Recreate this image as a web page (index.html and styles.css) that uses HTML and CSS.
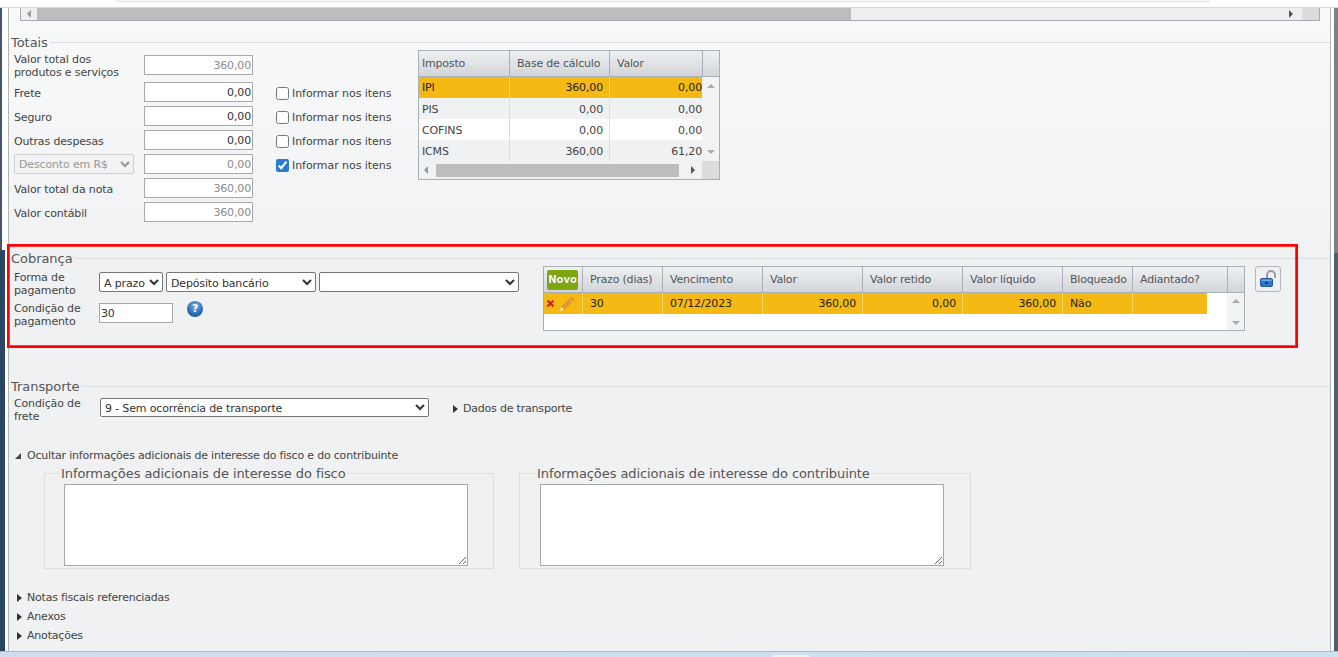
FILE: index.html
```html
<!DOCTYPE html>
<html lang="pt-BR">
<head>
<meta charset="utf-8">
<title>Nota fiscal</title>
<link rel="stylesheet" href="styles.css">
</head>
<body>
<div class="screen">
  <div class="top-strip"><div class="top-pill"></div></div>
  <div class="desk">
    <div class="left-edge"></div>
    <main class="window">
      <div class="top-grid-end">
        <div class="hbar top-hbar">
          <span class="arrow-l"></span>
          <span class="thumb top-thumb"></span>
          <span class="hbar-rest"><span class="arrow-r"></span></span>
          <span class="corner top-corner"></span>
        </div>
      </div>

      <section class="sec sec-totais">
        <div class="head"><h2>Totais</h2></div>
        <div class="totais-body">
          <div class="form">
            <div class="row row-first"><label class="lab">Valor total dos<br>produtos e serviços</label><input class="num ro" value="360,00" readonly></div>
            <div class="row"><label class="lab">Frete</label><input class="num" value="0,00"></div>
            <div class="row"><label class="lab">Seguro</label><input class="num" value="0,00"></div>
            <div class="row"><label class="lab">Outras despesas</label><input class="num" value="0,00"></div>
            <div class="row"><select class="disc" disabled><option>Desconto em R$</option></select><input class="num ro" value="0,00" readonly></div>
            <div class="row"><label class="lab">Valor total da nota</label><input class="num ro" value="360,00" readonly></div>
            <div class="row"><label class="lab">Valor contábil</label><input class="num ro" value="360,00" readonly></div>
          </div>
          <div class="checks">
            <label class="chk"><input type="checkbox">Informar nos itens</label>
            <label class="chk"><input type="checkbox">Informar nos itens</label>
            <label class="chk"><input type="checkbox">Informar nos itens</label>
            <label class="chk chk-on"><input type="checkbox" checked>Informar nos itens</label>
          </div>
          <div class="tax">
            <div class="tax-head">
              <div>Imposto</div><div>Base de cálculo</div><div>Valor</div><div></div>
            </div>
            <div class="tax-main">
              <div class="tax-rows">
                <div class="tax-row sel"><div>IPI</div><div class="r">360,00</div><div class="r clip">0,00</div></div>
                <div class="tax-row alt"><div>PIS</div><div class="r">0,00</div><div class="r clip">0,00</div></div>
                <div class="tax-row"><div>COFINS</div><div class="r">0,00</div><div class="r clip">0,00</div></div>
                <div class="tax-row alt"><div>ICMS</div><div class="r">360,00</div><div class="r clip">61,20</div></div>
              </div>
              <div class="vbar"><span class="arrow-u"></span><span class="arrow-d"></span></div>
            </div>
            <div class="hbar tax-hbar">
              <span class="arrow-l"></span>
              <span class="thumb tax-thumb"></span>
              <span class="hbar-rest"><span class="arrow-r"></span></span>
              <span class="corner tax-corner"></span>
            </div>
          </div>
        </div>
      </section>

      <section class="sec sec-cobranca">
        <div class="head"><h2>Cobrança</h2></div>
        <div class="cob-body">
          <div class="cob-form">
            <div class="cob-line">
              <label class="lab lab-cob">Forma de<br>pagamento</label>
              <select class="sel-a"><option>A prazo</option></select>
              <select class="sel-b"><option>Depósito bancário</option></select>
              <select class="sel-c"><option></option></select>
            </div>
            <div class="cob-line cob-line2">
              <label class="lab lab-cob">Condição de<br>pagamento</label>
              <input class="cond" value="30">
              <span class="help">?</span>
            </div>
          </div>
          <div class="parc">
            <div class="parc-head">
              <div class="novo-cell"><span class="novo">Novo</span></div>
              <div>Prazo (dias)</div><div>Vencimento</div><div>Valor</div><div>Valor retido</div><div>Valor líquido</div><div>Bloqueado</div><div>Adiantado?</div><div></div>
            </div>
            <div class="parc-main">
              <div class="parc-rows">
                <div class="parc-row">
                  <div class="acts">
                    <svg width="9" height="9" viewBox="0 0 9 9" aria-hidden="true"><path d="M1.5 1.5 7.5 7.5M7.5 1.5 1.5 7.5" stroke="#c8261c" stroke-width="2" fill="none"/></svg>
                    <svg width="16" height="16" viewBox="0 0 16 16" aria-hidden="true"><path d="M12.5 1 15 3.5 5.2 13.3 2.4 11z" fill="#e8952f" stroke="#cf7f22" stroke-width=".6"/><path d="M11 3.4 13 5.4" stroke="#f8cf8f" stroke-width="1"/><path d="M2.4 11 5.2 13.3 1.2 15z" fill="#fff3d8"/></svg>
                  </div>
                  <div>30</div><div>07/12/2023</div><div class="r">360,00</div><div class="r">0,00</div><div class="r">360,00</div><div>Não</div><div></div>
                </div>
              </div>
              <div class="vbar parc-vbar"><span class="arrow-u"></span><span class="arrow-d"></span></div>
            </div>
          </div>
          <button class="lock" type="button" aria-label="Desbloquear">
            <svg width="20" height="20" viewBox="0 0 20 20" aria-hidden="true"><path d="M9 9V6a4 4 0 0 1 8 0v3" fill="none" stroke="#9a9da2" stroke-width="2"/><rect x="2.5" y="9.5" width="12" height="8" rx="1.5" fill="#2f78cc" stroke="#23599c"/><rect x="3.5" y="10.5" width="10" height="1.5" fill="#66abe8"/><circle cx="8.5" cy="14" r="1.3" fill="#102f55"/></svg>
          </button>
        </div>
      </section>

      <section class="sec sec-transporte">
        <div class="head"><h2>Transporte</h2></div>
        <div class="trans-body">
          <label class="lab lab-frete">Condição de<br>frete</label>
          <select class="sel-frete"><option>9 - Sem ocorrência de transporte</option></select>
          <span class="toggle toggle-dados"><i class="tri"></i>Dados de transporte</span>
        </div>
      </section>

      <div class="toggle toggle-ocultar"><i class="tri-open"></i>Ocultar informações adicionais de interesse do fisco e do contribuinte</div>

      <div class="infos">
        <fieldset class="info info-a">
          <legend>Informações adicionais de interesse do fisco</legend>
          <textarea></textarea>
        </fieldset>
        <fieldset class="info info-b">
          <legend>Informações adicionais de interesse do contribuinte</legend>
          <textarea></textarea>
        </fieldset>
      </div>

      <div class="toggles">
        <div class="toggle"><i class="tri"></i>Notas fiscais referenciadas</div>
        <div class="toggle"><i class="tri"></i>Anexos</div>
        <div class="toggle"><i class="tri"></i>Anotações</div>
      </div>
    </main>
    <div class="right-edge"></div>
  </div>
  <div class="footer"><div class="foot-pill"></div></div>
  <div class="redbox"></div>
</div>
</body>
</html>
```
FILE: styles.css
```css
* { box-sizing: border-box; }
html, body { margin: 0; height: 100%; overflow: hidden; }
body { font: 11px/13px "DejaVu Sans", Verdana, sans-serif; letter-spacing: -0.15px; color: #444; background: #fff; }

.screen { position: relative; width: 1338px; height: 657px; display: flex; flex-direction: column; }
.top-strip { height: 8px; background: #fff; border-bottom: 1px solid #d8d8d8; flex: none; overflow: hidden; }
.top-pill { width: 1095px; height: 3px; margin-left: 115px; background: #f1f1f1; border-radius: 0 0 12px 12px; }

.desk { flex: 1; display: flex; min-height: 0; }
.left-edge { width: 8px; flex: none; background:
  linear-gradient(to right, #46566a 0, #46566a 2px, #fff 2px) top left / 8px 242px no-repeat,
  linear-gradient(to right, #2c4560 0, #2c4560 5px, #fff 5px); }
.right-edge { width: 7px; flex: none; background:
  linear-gradient(to right, #fff 0, #fff 3px, #808080 3px) top left / 7px 245px no-repeat,
  linear-gradient(to right, #fff 0, #fff 3px, #50606f 3px); }
.window { flex: 1; min-width: 0; border-left: 1px solid #b4b4b4; border-right: 1px solid #b4b4b4;
  background: linear-gradient(to bottom, #f8fafa 0, #f0f1f3 255px); overflow: hidden; }

.footer { height: 6px; flex: none; border-top: 1px solid #b4b8bc; background: linear-gradient(to right, #d3dcef, #c9e3f1); display: flex; justify-content: center; }
.foot-pill { width: 38px; height: 3px; margin-top: 3px; background: #f2f2ea; border-radius: 3px 3px 0 0; transform: translateX(122px); }

.redbox { position: absolute; left: 7px; top: 244px; width: 1291px; height: 104px; border: 2px solid #f00; box-shadow: inset 0 0 0 1px rgba(255, 0, 0, .75); pointer-events: none; }

/* scrollbars */
.top-grid-end { margin: 0 10px 0 11px; height: 13px; border: 1px solid #a4abb6; border-top: 0; }
.hbar { display: flex; align-items: center; background: #efefef; }
.top-hbar { height: 12px; }
.arrow-l, .arrow-r { width: 0; height: 0; border-top: 4px solid transparent; border-bottom: 4px solid transparent; flex: none; }
.arrow-l { border-right: 4px solid #999; margin-left: 6px; }
.arrow-r { border-left: 4px solid #555; }
.thumb { background: #bdbdbd; flex: none; height: 12px; }
.top-thumb { width: 814px; margin-left: 6px; }
.hbar-rest { flex: 1; display: flex; align-items: center; justify-content: flex-end; padding-right: 9px; }
.corner { background: #dcdcdc; flex: none; height: 100%; }
.top-corner { width: 17px; }

/* section heads */
.head { display: flex; align-items: flex-start; height: 16px; padding-left: 2px; }
.head::after { content: ""; flex: 1; height: 1px; background: #dcdedf; margin: 8px 0 0 2px; }
.head h2 { margin: 0; padding-top: 1px; font: 13px/16px "DejaVu Sans", Verdana, sans-serif; letter-spacing: -0.05px; color: #555; }

.sec-totais { margin-top: 13px; height: 216px; }
.sec-cobranca { height: 128px; }
.sec-transporte { height: 62px; }

/* totais */
.totais-body { display: flex; align-items: flex-start; padding-left: 5px; }
.form { width: 239px; padding-top: 5px; flex: none; }
.row { display: flex; align-items: center; height: 20px; margin-bottom: 4px; }
.row-first { margin-bottom: 7px; }
.lab { display: block; width: 130px; padding-top: 2px; flex: none; color: #444; }
input, select, textarea { font: 11px "DejaVu Sans", Verdana, sans-serif; letter-spacing: -0.15px; }
.num { width: 109px; height: 20px; border: 1px solid #a9a9a9; background: #fff; text-align: right; padding: 0 1px; color: #333; border-radius: 0; outline: 0; }
.ro { color: #8a8a8a; }
.disc { width: 120px; height: 20px; margin-right: 10px; margin-left: 0; color: #999; border: 1px solid #d0d0d0; background: #f1f2f3; border-radius: 2px; opacity: 1; padding: 1px 0 0; }

.checks { width: 142px; margin-left: 23px; padding-top: 36px; flex: none; }
.chk { display: flex; align-items: center; height: 14px; margin-bottom: 10px; color: #444; letter-spacing: -0.06px; }
.chk input { margin: 0 3px 0 0; width: 13px; height: 13px; flex: none; }
.chk-on input { accent-color: #2b7bd0; }

.tax { width: 302px; height: 130px; border: 1px solid #a9afb8; flex: none; background: #fff; }
.tax-head, .tax-row { display: grid; grid-template-columns: 91px 100px 92px; }
.tax-head { grid-template-columns: 91px 100px 93px 16px; height: 26px; border-bottom: 1px solid #a9afb8; background: linear-gradient(to bottom, #eef0f1, #d2d5d9); }
.tax-head div { line-height: 26px; padding-left: 3px; border-right: 1px solid #a9afb8; color: #555; letter-spacing: -0.2px; }
.tax-head div:nth-child(2), .tax-head div:nth-child(3) { padding-left: 7px; }
.tax-head div:last-child { border-right: 0; }
.tax-main { display: flex; height: 84px; }
.tax-rows { width: 283px; flex: none; }
.tax-row { height: 21px; grid-template-rows: 21px; background: #fff; overflow: hidden; }
.tax-row div { line-height: 21px; padding: 1px 6px 0 3px; border-right: 1px solid #dcdcdc; overflow: hidden; color: #444; }
.tax-row .r { text-align: right; }
.tax-row .clip { border-right: 0; padding: 1px 0 0; }
.tax-row.alt { background: #f0f1f3; }
.tax-row.sel { background: #f5b914; }
.tax-row.sel div { border-right-color: #f8d567; color: #222; line-height: 21px; padding-top: 0; }
.vbar { flex: 1; display: flex; flex-direction: column; justify-content: space-between; align-items: center; background: #f2f3f3; padding: 7px 0 7px; }
.arrow-u, .arrow-d { width: 0; height: 0; border-left: 4px solid transparent; border-right: 4px solid transparent; }
.arrow-u { border-bottom: 4px solid #aaa; }
.arrow-d { border-top: 4px solid #aaa; }
.tax-hbar { height: 18px; background: #f1f2f3; }
.tax-hbar .arrow-l { margin-left: 5px; }
.tax-thumb { width: 243px; margin-left: 8px; height: 13px; }
.tax-hbar .hbar-rest { padding-right: 7px; }
.tax-corner { width: 17px; }

/* cobranca */
.cob-body { display: flex; align-items: flex-start; padding-left: 5px; }
.cob-form { width: 529px; padding-top: 6px; flex: none; }
.cob-line { display: flex; align-items: center; height: 20px; }
.cob-line2 { margin-top: 11px; }
.lab-cob { width: 85px; padding-top: 3px; }
.cob-line:first-child .lab-cob { padding-top: 4px; }
.cob-line select { height: 20px; padding: 2px 0 0; border: 1px solid #767676; border-radius: 2px; background: #fff; color: #333; margin-right: 3px; }
.sel-a { width: 64px; }
.sel-b { width: 150px; }
.sel-c { width: 200px; }
.cond { width: 74px; height: 20px; border: 1px solid #a9a9a9; padding: 0 1px; color: #333; background: #fff; }
.help { width: 16px; height: 16px; margin: -8px 0 0 14px; border-radius: 50%; background: radial-gradient(circle at 50% 30%, #6ba9e2, #1c5fa8 75%); color: #fff; font: bold 11px/16px "DejaVu Sans", sans-serif; text-align: center; }

.parc { width: 702px; height: 65px; border: 1px solid #a9afb8; flex: none; background: #fff; }
.parc-head { display: grid; grid-template-columns: 39px 80px 100px 100px 100px 100px 70px 95px 16px; height: 26px; border-bottom: 1px solid #a9afb8; background: linear-gradient(to bottom, #eef0f1, #d2d5d9); }
.parc-head div { line-height: 26px; padding-left: 7px; border-right: 1px solid #a9afb8; color: #555; letter-spacing: -0.2px; }
.parc-head div:last-child { border-right: 0; }
.parc-head .novo-cell { padding: 3px 0 0 3px; line-height: 1; }
.novo { display: block; width: 31px; height: 20px; background: #7ea60f; border-radius: 2px; color: #fff; font: bold 10px/20px "DejaVu Sans", sans-serif; letter-spacing: 0; text-align: center; text-shadow: 0 0 1px #4a6a00; }
.parc-main { display: flex; height: 37px; }
.parc-rows { width: 683px; flex: none; }
.parc-row { display: grid; grid-template-columns: 39px 80px 100px 100px 100px 100px 70px 74px; width: 663px; height: 21px; background: #f5b914; }
.parc-row div { line-height: 21px; padding: 0 6px 0 7px; border-right: 1px solid #f8d567; color: #222; }
.parc-row div:last-child { border-right: 0; }
.parc-row .r { text-align: right; }
.parc-row .acts { display: flex; align-items: center; gap: 4px; padding: 0 0 0 2px; }
.parc-vbar { padding: 6px 0 5px; }
.lock { width: 26px; height: 26px; margin-left: 10px; padding: 2px; border: 1px solid #b4b8bf; border-radius: 3px; background: #eef0f2; display: flex; align-items: center; justify-content: center; }

/* transporte */
.trans-body { display: flex; align-items: center; padding: 4px 0 0 5px; height: 23px; }
.lab-frete { width: 86px; margin-top: 4px; padding-top: 0; }
.sel-frete { width: 329px; height: 19px; border: 1px solid #767676; border-radius: 2px; background: #fff; color: #333; padding: 1px 0 0; }

.toggle { display: flex; align-items: center; height: 13px; color: #444; letter-spacing: -0.2px; }
.toggle-dados { margin-left: 24px; padding-top: 2px; }
.tri { width: 0; height: 0; border-top: 4px solid transparent; border-bottom: 4px solid transparent; border-left: 5px solid #333; margin-right: 5px; }
.tri-open { width: 0; height: 0; border-left: 6px solid transparent; border-bottom: 6px solid #444; margin-right: 6px; }
.toggle-ocultar { margin: 9px 0 0 6px; }

/* infos */
.infos { display: flex; margin: 2px 0 0 35px; }
.info { margin: 0; padding: 0 0 0 19px; height: 105px; border: 1px solid #dcdedf; min-width: 0; }
.info legend { margin-left: -4px; padding: 2px 1px 0; font: 13px/16px "DejaVu Sans", Verdana, sans-serif; letter-spacing: -0.08px; color: #555; }
.info textarea { display: block; width: 404px; height: 82px; margin-top: 2px; border: 1px solid #a9a9a9; background: #fff; border-radius: 0; padding: 2px; }
.info-a { width: 450px; }
.info-b { width: 452px; margin-left: 25px; padding-left: 20px; }
.info-b legend { margin-left: -4px; }

.toggles { margin: 22px 0 0 8px; display: flex; flex-direction: column; gap: 6px; }
```
